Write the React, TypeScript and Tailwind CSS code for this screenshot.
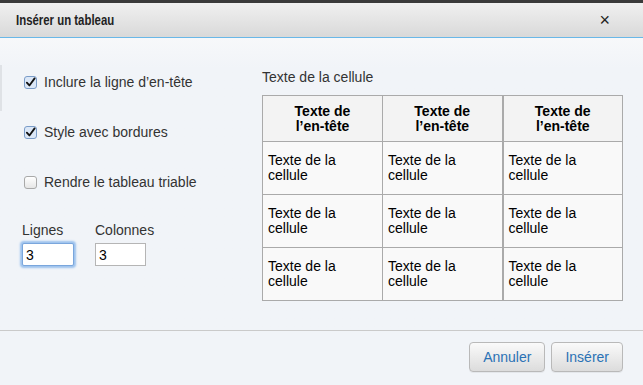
import { useState } from "react";

const font = { fontFamily: '"Liberation Sans", Arial, sans-serif' };

function Check({ checked }: { checked: boolean }) {
  return (
    <span
      className={`w-[13px] h-[13px] rounded-[3px] border flex items-center justify-center ${
        checked ? "border-[#7a9cc8] bg-[#dbe7f7]" : "border-[#a9a9a9] bg-gradient-to-b from-white to-[#e6e6e6]"
      }`}
    >
      {checked && (
        <svg viewBox="0 0 12 12" className="w-[11px] h-[11px]">
          <path d="M2 6.2 L4.8 9.2 L10.5 1.5" fill="none" stroke="#111" strokeWidth={2} strokeLinecap="round" strokeLinejoin="round" />
        </svg>
      )}
    </span>
  );
}

export default function App() {
  const [opts] = useState([
    { label: "Inclure la ligne d\u2019en-tête", checked: true },
    { label: "Style avec bordures", checked: true },
    { label: "Rendre le tableau triable", checked: false },
  ]);
  const cols = [0, 1, 2];
  const rows = [0, 1, 2];

  return (
    <div className="w-[643px] h-[385px] overflow-hidden flex flex-col bg-[#f1f4f8] text-[#333]" style={font}>
      <div className="h-[3px] bg-[#3a3a3a]" />
      {/* title bar */}
      <div className="h-[35px] flex items-center justify-between px-4 bg-gradient-to-b from-[#f0f0f0] to-[#d9d9d9] border-b border-[#6ab8e8]">
        <span className="inline-block text-[15px] font-bold text-[#222] mt-[1px] scale-x-[0.76] origin-left whitespace-nowrap">
          Insérer un tableau
        </span>
        <span className="text-[18px] leading-none text-[#222] mr-[17px]">×</span>
      </div>

      <div className="flex-1 flex bg-gradient-to-b from-[#f7f8fa] to-[#f1f4f8] from-[0px] to-[30px]">
        {/* left options */}
        <div className="w-[262px] pl-[22px] pt-[36px] relative">
          <div className="absolute left-0 top-[27px] w-[2px] h-[46px] bg-[#dfe2e6]" />
          <div className="flex flex-col gap-[34px]">
            {opts.map((o) => (
              <label key={o.label} className="flex items-center gap-[7px] h-[16px] pl-[2px] text-[14px]">
                <Check checked={o.checked} />
                <span>{o.label}</span>
              </label>
            ))}
          </div>
          <div className="flex gap-[21px] mt-[32px] text-[14px]">
            <div className="flex flex-col">
              <span className="leading-[17px]">Lignes</span>
              <input
                readOnly
                value="3"
                className="mt-[4px] w-[52px] h-[23px] px-[3px] text-[14px] text-black bg-white border border-[#7aa6dc] rounded-[2px] shadow-[0_0_2px_2px_#9cc2ee] outline-none"
              />
            </div>
            <div className="flex flex-col">
              <span className="leading-[17px]">Colonnes</span>
              <input
                readOnly
                value="3"
                className="mt-[4px] w-[51px] h-[23px] px-[3px] text-[14px] text-black bg-white border border-[#b5b5b5] outline-none"
              />
            </div>
          </div>
        </div>

        {/* preview */}
        <div className="pt-[31px]">
          <div className="text-[14px] leading-[16px] text-[#333]">Texte de la cellule</div>
          <table className="mt-[10px] border-collapse text-[14px] leading-[15px] text-black">
            <thead>
              <tr>
                {cols.map((c) => (
                  <th
                    key={c}
                    className={`w-[120px] h-[46px] bg-[#f3f3f3] border border-[#aaa] font-bold text-center align-middle ${
                      c === 1 ? "border-r-2" : ""
                    }`}
                  >
                    Texte de
                    <br />
                    l’en-tête
                  </th>
                ))}
              </tr>
            </thead>
            <tbody>
              {rows.map((r) => (
                <tr key={r}>
                  {cols.map((c) => (
                    <td
                      key={c}
                      className={`w-[120px] h-[53px] bg-[#f9f9f9] border border-[#aaa] align-top pl-[5px] pt-[11px] ${
                        c === 1 ? "border-r-2" : ""
                      }`}
                    >
                      Texte de la
                      <br />
                      cellule
                    </td>
                  ))}
                </tr>
              ))}
            </tbody>
          </table>
        </div>
      </div>

      {/* footer */}
      <div className="h-[55px] border-t border-[#cacaca] flex items-start justify-end gap-[6px] pr-[20px] pt-[11px]">
        {["Annuler", "Insérer"].map((b) => (
          <button
            key={b}
            className="h-[30px] px-[13px] rounded-[4px] border border-[#b9b9b9] bg-gradient-to-b from-[#fafafa] to-[#dcdcdc] text-[14px] text-[#2a72b5] shadow-[0_1px_0_rgba(0,0,0,0.05)]"
          >
            {b}
          </button>
        ))}
      </div>
    </div>
  );
}
